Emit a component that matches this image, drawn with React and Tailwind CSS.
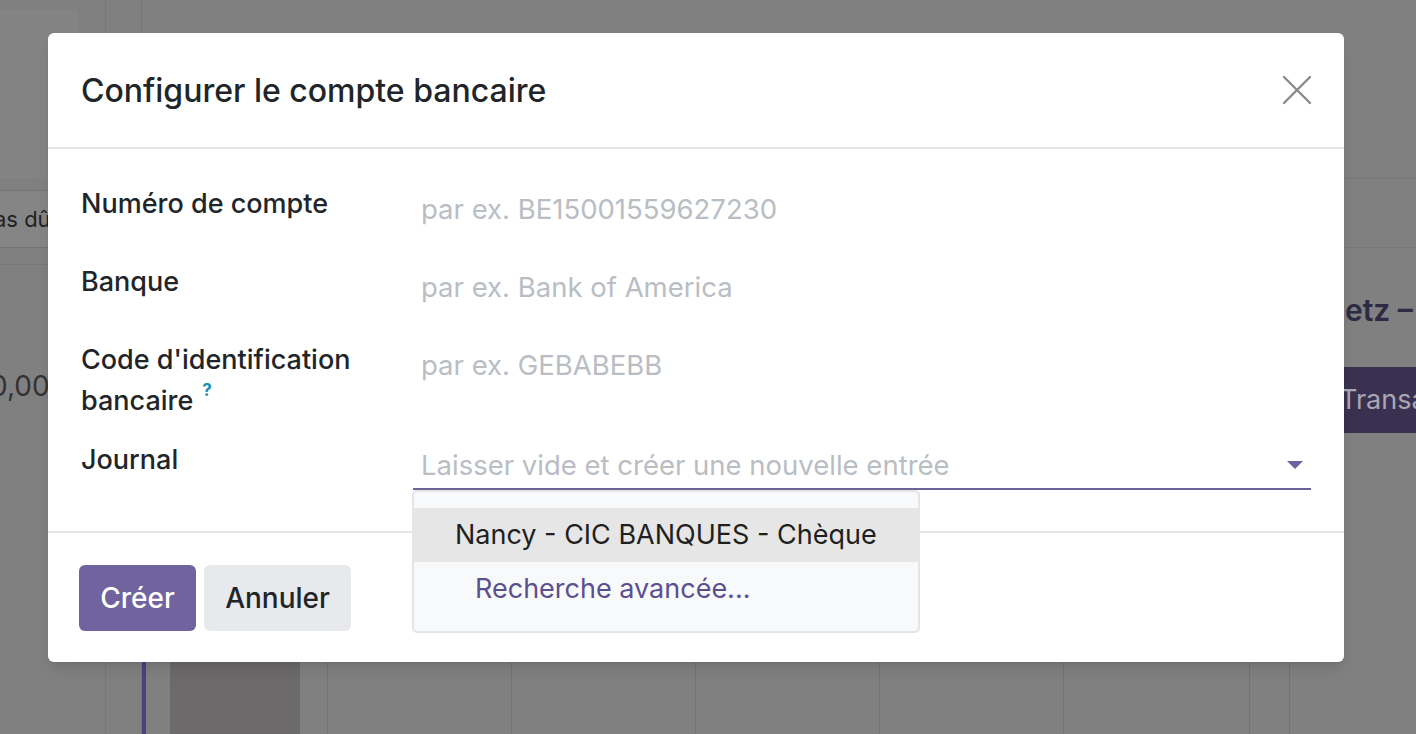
import React from 'react';

const font = { fontFamily: 'Inter, "Noto Sans", sans-serif' };

const Field = ({ label, placeholder, help, rowClass }) => (
  <div className={`flex ${rowClass}`}>
    <div className="w-[332px] shrink-0 text-[27px] leading-[41px] font-medium text-[#212529]">
      {label}
      {help && <span className="relative -top-[14px] ml-[9px] text-[17px] font-bold text-[#1a8fb3]">?</span>}
    </div>
    <div className="flex-1 h-[48px] flex items-center px-2 pt-[6px] text-[27.5px] text-[#b9bdc4] whitespace-nowrap">
      {placeholder}
    </div>
  </div>
);

export default function App() {
  return (
    <div className="relative w-[1416px] h-[734px] overflow-hidden bg-[#808080]" style={font}>
      {/* dimmed page behind the dialog */}
      <div className="flex h-full">
        <div className="w-[107px] border-r border-[#767676] flex flex-col">
          <div className="h-[178px] pt-[10px]">
            <div className="w-[78px] h-[168px] bg-[#838383]" />
          </div>
          <div className="mt-[12px] h-[58px] border-y border-[#747474] bg-[#858585] flex items-center text-[22px] text-[#222] whitespace-nowrap -ml-[6px]">
            as dû
          </div>
          <div className="mt-[16px] border-t border-[#777]" />
          <div className="mt-[100px] text-[28px] text-[#333] -ml-[10px]">0,00</div>
        </div>
        <div className="w-[36px] border-r border-[#767676]">
          <div className="mt-[190px] h-[58px] bg-[#858585] border-y border-[#747474]" />
        </div>
        <div className="w-[4px] flex flex-col">
          <div className="flex-1" />
          <div className="h-[74px] bg-[#4e4181]" />
        </div>
        <div className="flex-1 flex flex-col">
          <div className="flex-1" />
          <div className="h-[74px] flex">
            <div className="w-[24px]" />
            <div className="w-[130px] bg-[#6d6a6c]" />
            <div className="w-[28px] border-r border-[#737373]" />
            <div className="w-[184px] border-r border-[#737373]" />
            <div className="w-[184px] border-r border-[#737373]" />
            <div className="w-[184px] border-r border-[#737373]" />
            <div className="w-[184px] border-r border-[#737373]" />
            <div className="w-[186px] border-r border-[#737373]" />
            <div className="w-[40px] border-r border-[#737373]" />
          </div>
        </div>
        <div className="w-[126px] flex flex-col">
          <div className="h-[178px]" />
          <div className="h-[70px] border-y border-[#777]" />
          <div className="mt-[40px] text-[30px] font-semibold text-[#2e2a44] whitespace-nowrap pl-[55px]">etz – Banque</div>
          <div className="mt-[34px] h-[66px] bg-[#3a3150] flex items-center text-[27px] text-[#a9a7b3] whitespace-nowrap pl-[50px]">
            Transactions
          </div>
        </div>
      </div>

      {/* dialog */}
      <div className="absolute left-[48px] top-[33px] w-[1296px] h-[629px] rounded-[6px] bg-white shadow-lg flex flex-col">
        <div className="h-[116px] shrink-0 flex items-center justify-between pl-[33px] pr-[32px] border-b-2 border-[#e4e6e8]">
          <h1 className="text-[32px] font-medium text-[#212529] pt-[2px]">Configurer le compte bancaire</h1>
          <svg width="30" height="30" viewBox="0 0 30 30">
            <path d="M2 2 L28 28 M28 2 L2 28" stroke="#8a8a8a" strokeWidth="2.4" strokeLinecap="round" />
          </svg>
        </div>

        <div className="h-[384px] shrink-0 pt-[34px] pl-[33px] pr-[33px] border-b-2 border-[#e4e6e8]">
          <Field rowClass="h-[78px]" label="Numéro de compte" placeholder="par ex. BE15001559627230" />
          <Field rowClass="h-[78px]" label="Banque" placeholder="par ex. Bank of America" />
          <Field rowClass="h-[100px]" label={<>Code d'identification<br />bancaire</>} help placeholder="par ex. GEBABEBB" />
          <div className="flex">
            <div className="w-[332px] shrink-0 text-[27px] leading-[41px] font-medium text-[#212529]">Journal</div>
            <div className="flex-1 relative">
              <div className="h-[51px] flex items-center justify-between pl-2 pr-[8px] border-b-2 border-[#6d6399]">
                <span className="text-[27.5px] text-[#b9bdc4] pt-[4px] whitespace-nowrap">Laisser vide et créer une nouvelle entrée</span>
                <svg width="16" height="9" viewBox="0 0 16 9" className="mt-[4px]">
                  <path d="M0 0 H16 L8 8 Z" fill="#6f62a0" />
                </svg>
              </div>
              <div className="absolute -left-[1px] top-[51px] w-[508px] h-[143px] z-10 rounded-[5px] border-2 border-[#e3e5e8] bg-[#f8f9fb] pt-[16px]">
                <div className="h-[54px] bg-[#e6e6e6] flex items-center pl-[41px] text-[27px] text-[#1f1f1f] whitespace-nowrap">
                  Nancy - CIC BANQUES - Chèque
                </div>
                <div className="h-[54px] flex items-center pl-[61px] text-[27px] text-[#5b4f8f] whitespace-nowrap">
                  Recherche avancée...
                </div>
              </div>
            </div>
          </div>
        </div>

        <div className="flex-1 flex items-start gap-[8px] pt-[32px] pl-[31px]">
          <button className="h-[66px] w-[117px] rounded-[6px] bg-[#71639e] text-white text-[28px] font-medium">Créer</button>
          <button className="h-[66px] w-[147px] rounded-[6px] bg-[#e7e9ed] text-[#212529] text-[28px] font-medium">Annuler</button>
        </div>
      </div>
    </div>
  );
}
